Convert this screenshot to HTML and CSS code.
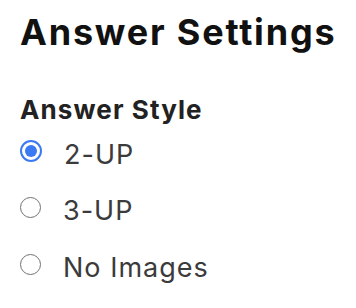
FILE: index.html
```html
<!DOCTYPE html>
<html>
<head>
<meta charset="utf-8">
<link rel="stylesheet" href="styles.css">
</head>
<body>
<div class="panel">
  <h1 class="title">Answer Settings</h1>
  <h2 class="subtitle">Answer Style</h2>
  <div class="options">
    <label class="option">
      <span class="radio checked"></span>
      <span class="label">2-UP</span>
    </label>
    <label class="option">
      <span class="radio"></span>
      <span class="label">3-UP</span>
    </label>
    <label class="option">
      <span class="radio"></span>
      <span class="label">No Images</span>
    </label>
  </div>
</div>
</body>
</html>
```
FILE: styles.css
```css
html, body {
  margin: 0;
  padding: 0;
  background: #ffffff;
}
.panel {
  font-family: "Inter", "Noto Sans", sans-serif;
  padding: 12px 0 0 20px;
}
.title {
  margin: 0;
  font-size: 36px;
  line-height: 40px;
  font-weight: 700;
  letter-spacing: 1.8px;
  white-space: nowrap;
  color: #111111;
}
.subtitle {
  margin: 42px 0 0 0;
  font-size: 26px;
  line-height: 32px;
  font-weight: 700;
  letter-spacing: 1.1px;
  white-space: nowrap;
  color: #222222;
}
.options {
  display: flex;
  flex-direction: column;
  gap: 24.5px;
  margin-top: 12.5px;
}
.option {
  display: flex;
  align-items: flex-start;
  gap: 22px;
  height: 32px;
}
.radio {
  width: 21px;
  height: 21px;
  margin-top: 2px;
  border: 1.5px solid #727272;
  border-radius: 50%;
  box-sizing: border-box;
  flex: none;
  position: relative;
}
.radio.checked {
  width: 22px;
  height: 22px;
  margin-top: 1.5px;
  border: 2.5px solid #3a7af3;
}
.radio.checked::after {
  content: "";
  position: absolute;
  left: 2.5px;
  top: 2.5px;
  width: 12px;
  height: 12px;
  border-radius: 50%;
  background: #3a7af3;
}
.label {
  font-size: 27px;
  line-height: 32px;
  letter-spacing: 1px;
  white-space: nowrap;
  color: #3b3b3b;
}
```
